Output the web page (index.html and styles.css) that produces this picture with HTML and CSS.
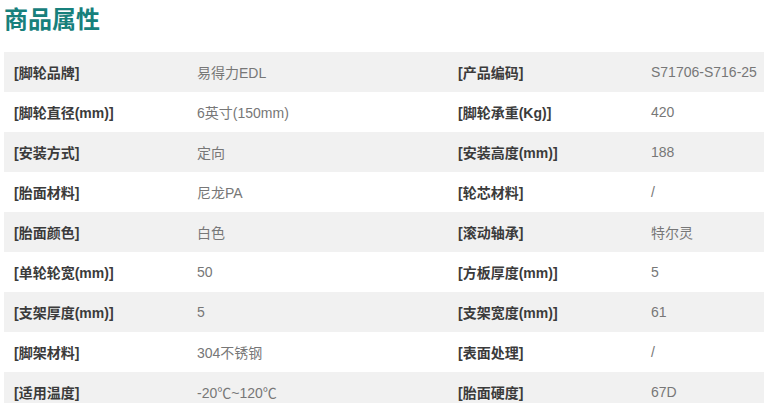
FILE: index.html
```html
<!DOCTYPE html>
<html lang="zh">
<head>
<meta charset="utf-8">
<link rel="stylesheet" href="styles.css">
</head>
<body>
<div class="wrap">
  <h2 class="title">商品属性</h2>
  <table class="attrs">
    <colgroup>
      <col class="c1"><col class="c2"><col class="c3"><col class="c4">
    </colgroup>
    <tbody>
      <tr><th>[脚轮品牌]</th><td>易得力EDL</td><th>[产品编码]</th><td>S71706-S716-25</td></tr>
      <tr><th>[脚轮直径(mm)]</th><td>6英寸(150mm)</td><th>[脚轮承重(Kg)]</th><td>420</td></tr>
      <tr><th>[安装方式]</th><td>定向</td><th>[安装高度(mm)]</th><td>188</td></tr>
      <tr><th>[胎面材料]</th><td>尼龙PA</td><th>[轮芯材料]</th><td>/</td></tr>
      <tr><th>[胎面颜色]</th><td>白色</td><th>[滚动轴承]</th><td>特尔灵</td></tr>
      <tr><th>[单轮轮宽(mm)]</th><td>50</td><th>[方板厚度(mm)]</th><td>5</td></tr>
      <tr><th>[支架厚度(mm)]</th><td>5</td><th>[支架宽度(mm)]</th><td>61</td></tr>
      <tr><th>[脚架材料]</th><td>304不锈钢</td><th>[表面处理]</th><td>/</td></tr>
      <tr><th>[适用温度]</th><td>-20℃~120℃</td><th>[胎面硬度]</th><td>67D</td></tr>
    </tbody>
  </table>
</div>
</body>
</html>
```

FILE: styles.css
```css
html, body {
  margin: 0;
  padding: 0;
  background: #fff;
}
body {
  font-family: "Liberation Sans", Arial, "Noto Sans CJK SC", sans-serif;
  overflow: hidden;
}
.wrap {
  padding: 0 0 0 4px;
}
.title {
  margin: 0;
  height: 52px;
  padding-top: 4px;
  box-sizing: border-box;
  font-size: 24px;
  line-height: 28px;
  font-weight: bold;
  color: #17807c;
  font-family: "Noto Sans CJK SC", sans-serif;
}
.attrs {
  border-collapse: collapse;
  table-layout: fixed;
  width: 790px;
  font-size: 14px;
}
.c1 { width: 183px; }
.c2 { width: 261px; }
.c3 { width: 193px; }
.c4 { width: 153px; }
.attrs tr {
  height: 40px;
}
.attrs tr:nth-child(odd) {
  background: #f1f1f1;
}
.attrs th, .attrs td {
  padding: 0 0 0 10px;
  text-align: left;
  vertical-align: middle;
  white-space: nowrap;
}
.attrs th {
  font-weight: bold;
  color: #3b3b3b;
}
.attrs td {
  font-weight: normal;
  color: #777;
}
```
